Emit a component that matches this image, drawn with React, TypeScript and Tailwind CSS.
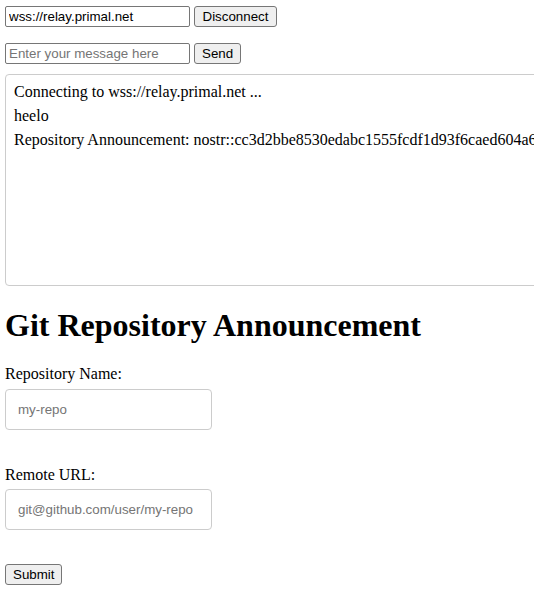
export default function App() {
  const serif = "font-['Liberation_Serif',_'Times_New_Roman',_serif]";
  const sans = "font-['Liberation_Sans',_Arial,_sans-serif]";
  return (
    <div className={`w-full overflow-hidden px-[5px] pt-[6px] pb-[16px] text-black bg-white ${serif}`}>
      {/* relay connection */}
      <div className="flex items-center gap-[4px]">
        <input
          defaultValue="wss://relay.primal.net"
          className={`w-[185px] h-[21px] border border-[#767676] rounded-[2px] px-[3px] text-[13.33px] text-black ${sans} outline-none`}
        />
        <button className={`h-[21px] px-[7.5px] border border-[#767676] rounded-[3px] bg-[#efefef] text-[13.33px] ${sans}`}>
          Disconnect
        </button>
      </div>
      <div className="flex items-center gap-[4px] mt-[16px]">
        <input
          placeholder="Enter your message here"
          className={`w-[185px] h-[21px] border border-[#767676] rounded-[2px] px-[3px] text-[13.33px] placeholder:text-[#757575] ${sans} outline-none`}
        />
        <button className={`h-[21px] px-[7px] border border-[#767676] rounded-[3px] bg-[#efefef] text-[13.33px] ${sans}`}>
          Send
        </button>
      </div>

      {/* log */}
      <div className="mt-[10px] h-[212px] w-[640px] shrink-0 border border-[#cccccc] rounded-[4px] px-[8px] pt-[5px] text-[16px] leading-[24px] whitespace-nowrap overflow-hidden">
        <div>Connecting to wss://relay.primal.net ...</div>
        <div>heelo</div>
        <div>Repository Announcement: nostr::cc3d2bbe8530edabc1555fcdf1d93f6caed604a6b3c1d09e</div>
      </div>

      <h1 className="mt-[21px] mb-[21.44px] text-[32px] font-bold leading-[1.15]">
        Git Repository Announcement
      </h1>

      <form onSubmit={(e) => e.preventDefault()}>
        <label className="block text-[16px] leading-[1.15]">Repository Name:</label>
        <input
          placeholder="my-repo"
          className={`block mt-[5.5px] w-[207px] h-[41px] border border-[#cccccc] rounded-[4px] px-[12px] text-[13.33px] placeholder:text-[#757575] ${sans} outline-none`}
        />
        <label className="block mt-[36px] text-[16px] leading-[1.15]">Remote URL:</label>
        <input
          placeholder="git@github.com/user/my-repo"
          className={`block mt-[4.5px] w-[207px] h-[41px] border border-[#cccccc] rounded-[4px] px-[12px] text-[13.33px] placeholder:text-[#757575] ${sans} outline-none`}
        />
        <button
          type="submit"
          className={`block mt-[34px] h-[21px] px-[7px] border border-[#767676] rounded-[3px] bg-[#efefef] text-[13.33px] ${sans}`}
        >
          Submit
        </button>
      </form>
    </div>
  );
}
